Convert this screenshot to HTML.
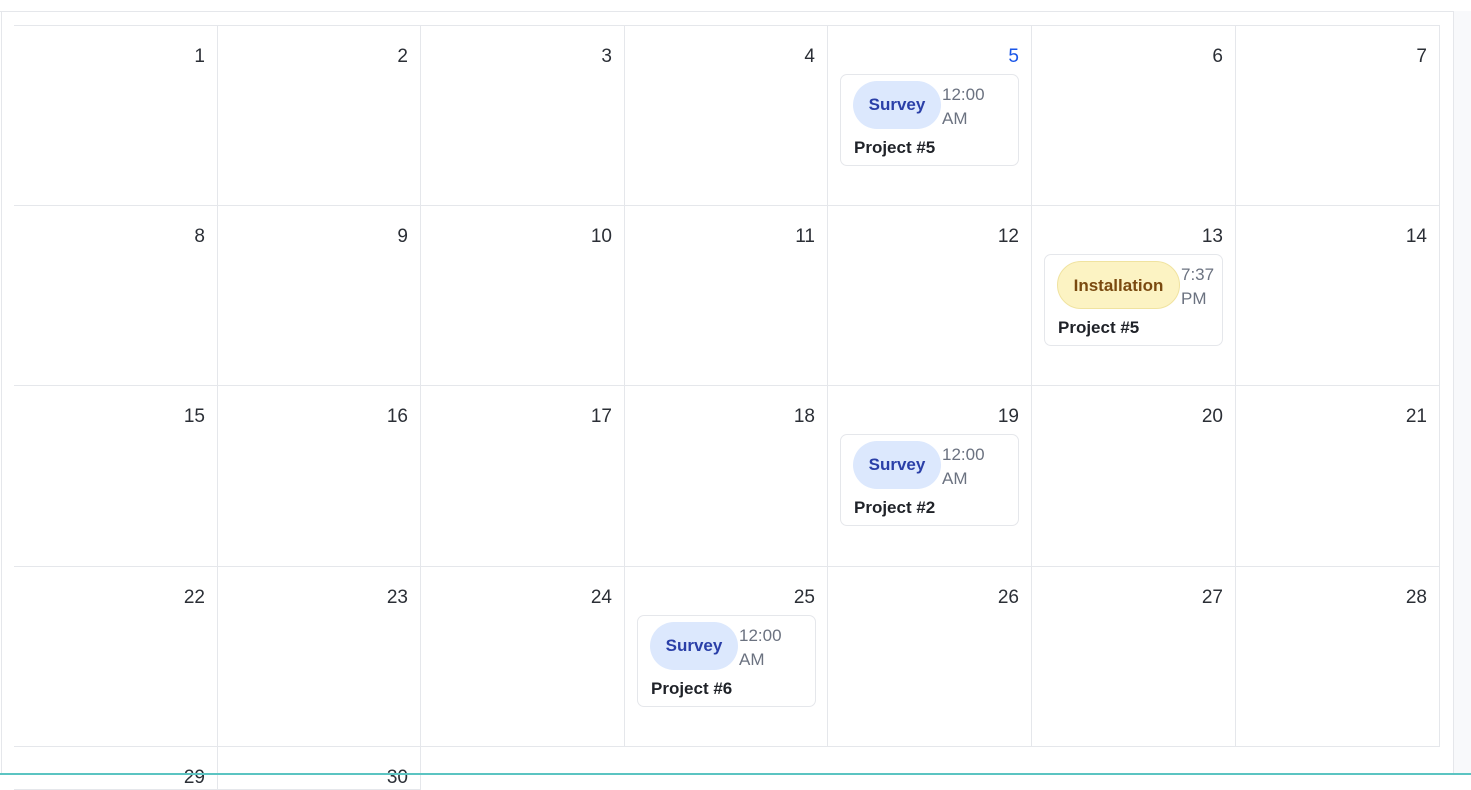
<!DOCTYPE html>
<html><head><style>
*{box-sizing:border-box;margin:0;padding:0}
body{width:1471px;height:775px;overflow:hidden;background:#fff;font-family:"Liberation Sans","DejaVu Sans",sans-serif;position:relative}
.top{position:absolute;left:0;top:11px;width:1453px;height:1px;background:#e5e7eb}
.lft{position:absolute;left:1px;top:11px;width:1px;height:764px;background:#e5e7eb}
.side{position:absolute;left:1453px;top:11px;width:18px;height:764px;background:#f8f9fb;border-left:1px solid #e5e7eb}
.bot{position:absolute;left:0;top:773px;width:1471px;height:2px;background:#5bc4c2}
.cell{position:absolute;border-right:1px solid #e5e7eb;border-bottom:1px solid #e5e7eb}
.n{position:absolute;right:12px;top:20px;font-size:19px;color:#2b2f36}
.ev{position:absolute;left:12px;top:48px;width:179px;height:92px;border:1px solid #e5e7eb;border-radius:7px;background:#fff}
.b{position:absolute;left:12px;top:6px;height:48px;border-radius:24px;font-size:17px;font-weight:bold;line-height:48px;text-align:center}
.sv{width:88px;background:#dce8fd;color:#2a3fa8}
.in{width:123px;background:#fcf3c3;color:#7a4a10;border:1px solid #f0e3a0}
.t{position:absolute;top:8px;font-size:17px;color:#6b7280;line-height:24px}
.p{position:absolute;left:13px;top:63px;font-size:17px;font-weight:bold;color:#1f2228}
</style></head><body>
<div class="top"></div><div class="lft"></div><div class="side"></div>
<div id="g"></div>
<div class="bot"></div>
<script>
var xs=[14,218,421,625,828,1032,1236,1440],ys=[25,206,386,567,747,790];
var h='';var d=1;
var ev={5:['sv','Survey','12:00<br>AM','Project #5'],13:['in','Installation','7:37<br>PM','Project #5'],19:['sv','Survey','12:00<br>AM','Project #2'],25:['sv','Survey','12:00<br>AM','Project #6']};
for(var r=0;r<5;r++)for(var c=0;c<7;c++){if(d>30)break;
var x=xs[c],y=ys[r],w=xs[c+1]-x,hh=ys[r+1]-y;
var s='left:'+x+'px;top:'+y+'px;width:'+w+'px;height:'+hh+'px;';
if(r==0)s+='border-top:1px solid #e5e7eb;';
h+='<div class="cell" style="'+s+'"><div class="n" style="'+(d==5?'color:#1a56e8':'')+'">'+d+'</div>';
if(ev[d]){var e=ev[d];var bw=e[0]=='sv'?88:123;
h+='<div class="ev"><div class="b '+e[0]+'">'+e[1]+'</div><div class="t" style="left:'+(13+bw)+'px">'+e[2]+'</div><div class="p">'+e[3]+'</div></div>';}
h+='</div>';d++;}
document.getElementById('g').innerHTML=h;
</script>
</body></html>
